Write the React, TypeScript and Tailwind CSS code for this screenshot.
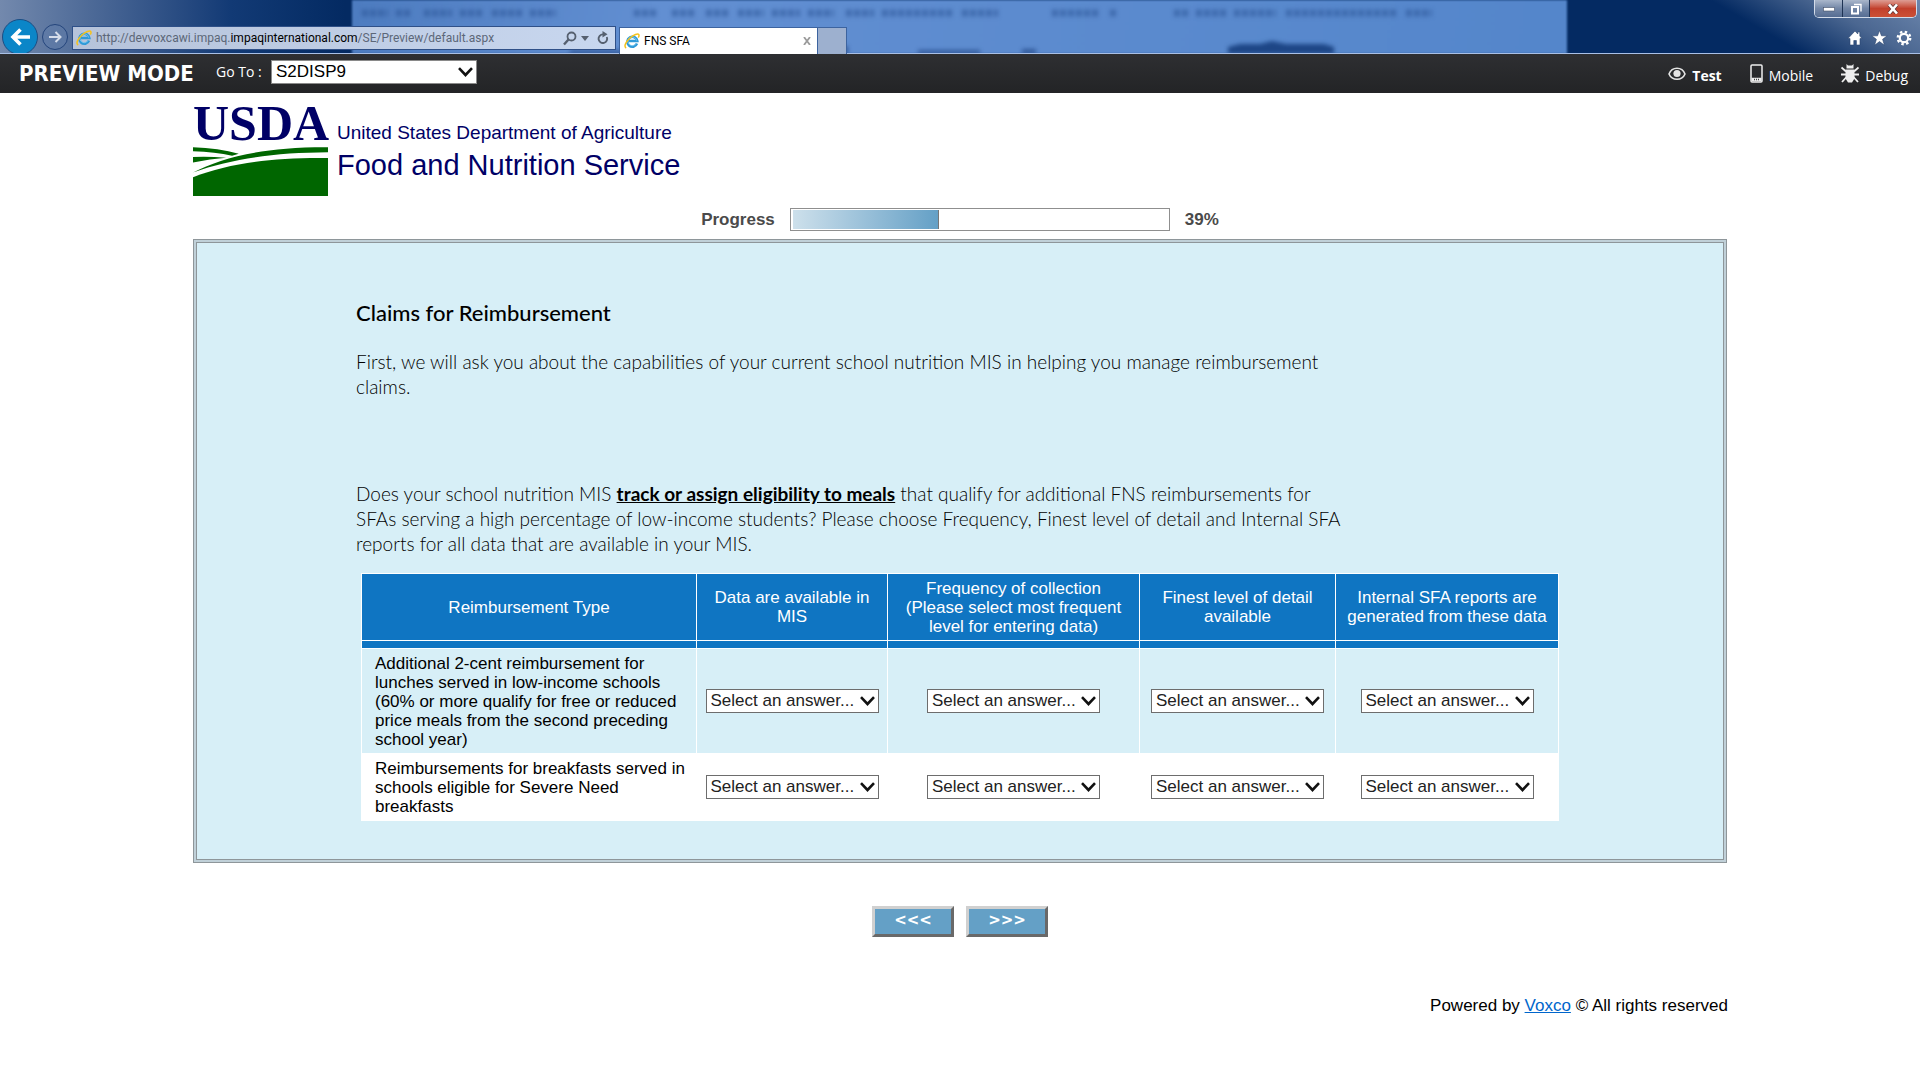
import { ReactNode } from "react";

const columns = [
    { title: "Data are available in MIS", width: "w-[191px]" },
    {
        title: "Frequency of collection (Please select most frequent level for entering data)",
        width: "w-[252px]",
    },
    { title: "Finest level of detail available", width: "w-[196px]" },
    {
        title: "Internal SFA reports are generated from these data",
        width: "w-[223px]",
    },
];

const rows = [
    {
        label: "Additional 2-cent reimbursement for lunches served in low-income schools (60% or more qualify for free or reduced price meals from the second preceding school year)",
        style: "h-[105px] bg-[#d7eff7]",
    },
    {
        label: "Reimbursements for breakfasts served in schools eligible for Severe Need breakfasts",
        style: "h-[67px] bg-white",
    },
];

// start x and length of the words on the window behind the glass
const ghostWords = [
    [362, 26], [396, 16], [424, 28], [460, 22], [492, 30], [530, 26],
    [634, 24], [672, 22], [706, 22], [738, 26], [772, 28], [808, 26],
    [846, 28], [882, 70], [962, 36], [1052, 48], [1110, 6],
    [1174, 14], [1196, 30], [1234, 42], [1286, 110], [1406, 26],
];

function IeLogo() {
    return (
        <svg className="size-4 shrink-0" viewBox="0 0 16 16" fill="none">
            <path
                d="M13 10.6A5 5 0 1 1 13.3 8H4.5"
                stroke="#2f9ad8"
                strokeWidth="2.6"
            />
            <path
                d="M12 10.6A4.4 4.4 0 1 1 12.6 7.6"
                stroke="#7fcdf3"
                strokeWidth=".8"
            />
            <path
                d="M2.2 15C-.6 13.6 2 8.6 6 5C9.800 1.600 14 .2 14.800 1.600C15.200 2.400 14.900 3.600 14.300 4.600"
                stroke="#f5c21b"
                strokeWidth="1.5"
            />
        </svg>
    );
}

function WindowChrome() {
    return (
        <header
            className="relative flex h-[54px] items-end overflow-hidden bg-[#042a62] font-['Roboto',sans-serif]"
        >
            <div className="absolute inset-0 bg-linear-to-r from-[#7389ad] via-[#123a75] via-12% to-[#042a62] to-18%" />
            <div className="absolute inset-y-0 right-0 w-64 bg-linear-[30deg] from-transparent from-40% via-[#4b6791] via-70% to-[#6c86ad]" />
            <div className="absolute inset-y-0 right-[353px] left-[352px] bg-linear-[100deg] from-[#4d7cc0] via-[#628fd2] via-25% to-[#5486cb] blur-[1px]" />
            <svg className="absolute inset-0 h-full w-full blur-[2px]">
                {ghostWords.map(([x, w]) => (
                    <line
                        key={x}
                        x1={x}
                        x2={x + w}
                        y1="13"
                        y2="13"
                        stroke="#2c5598"
                        strokeOpacity=".6"
                        strokeWidth="7"
                        strokeDasharray="6 2"
                    />
                ))}
                <path
                    d="M570 50h60v4h-60zM648 50h40v4h-40zM824 46h24v8h-24zM918 50h62v4h-62zM1022 49h14v5h-14z"
                    fill="#1f4585"
                    fillOpacity=".7"
                />
                <path d="M1228 54v-7l12-3h20l12-3 14 3h38l10 3v7z" fill="#1d4686" />
            </svg>
            <div className="absolute inset-x-0 bottom-0 h-px bg-[#a9c0e6]" />

            <nav className="relative flex h-[35px] items-start pl-0.5">
                <button aria-label="Back" className="h-[34px] w-[37px] overflow-hidden">
                    <svg width="37" height="37" viewBox="0 0 37 37">
                        <circle cx="18" cy="18" r="17.500" fill="#0b86c8" stroke="#1d4d83" />
                        <path
                            d="M28 18H11M18.500 10.500L11 18l7.500 7.500"
                            fill="none"
                            stroke="#fff"
                            strokeWidth="3.600"
                        />
                    </svg>
                </button>
                <button aria-label="Forward" className="ml-0.5 pt-1">
                    <svg width="28" height="28" viewBox="0 0 28 28">
                        <circle cx="14" cy="14" r="12.500" fill="#5f7ba8" fillOpacity=".6" stroke="#24457c" />
                        <path
                            d="M8 14h11M14.500 9l5 5-5 5"
                            fill="none"
                            stroke="#d4dcea"
                            strokeWidth="2"
                        />
                    </svg>
                </button>
            </nav>

            <div className="relative mb-1 ml-[3px] flex h-6 w-[544px] items-center gap-1 border border-[#2f5088] bg-linear-to-r from-[#b6c3da] to-[#c8d7ef] pr-1.5 pl-[3px]">
                <IeLogo />
                <span className="flex-1 whitespace-nowrap text-[12px] leading-4 text-[#5c6778]">
                    http://devvoxcawi.impaq.
                    <span className="text-black">impaqinternational.com</span>
                    /SE/Preview/default.aspx
                </span>
                <button aria-label="Search">
                    <svg width="14" height="15" viewBox="0 0 14 15" fill="none" stroke="#56606f">
                        <circle cx="8.500" cy="5.500" r="4" strokeWidth="1.800" />
                        <path d="M5.500 8.500L1 13.500" strokeWidth="2.400" />
                    </svg>
                </button>
                <button aria-label="Search options" className="mr-1">
                    <svg width="8" height="5" viewBox="0 0 8 5">
                        <path d="M0 0h8L4 5z" fill="#56606f" />
                    </svg>
                </button>
                <button aria-label="Refresh">
                    <svg width="12" height="14" viewBox="0 0 12 14" fill="none">
                        <path d="M9.800 6A4.300 4.300 0 1 1 6 3.400" stroke="#56606f" strokeWidth="1.900" />
                        <path d="M5.500 0v6.600L10.500 3.300z" fill="#56606f" />
                    </svg>
                </button>
            </div>

            <div className="relative ml-[3px] flex h-[27px] w-[199px] items-center gap-1 border-x border-t border-[#3c639f] bg-white pr-1.5 pl-1">
                <IeLogo />
                <span className="flex-1 text-[12px] leading-4 text-black">FNS SFA</span>
                <button aria-label="Close tab">
                    <svg width="8" height="8" viewBox="0 0 8 8">
                        <path d="M1 0l6 8M7 0L1 8" stroke="#9b9b9b" strokeWidth="1.800" />
                    </svg>
                </button>
            </div>
            <button
                aria-label="New tab"
                className="relative h-[27px] w-[29px] border-t border-r border-[#3c639f] bg-[#9db0cf]"
            />

            <div className="relative ml-auto flex h-full flex-col items-end pr-[3px]">
                <div className="flex h-[18px] overflow-hidden rounded-b-[5px] border border-t-0 border-[#d3dcea]">
                    <button
                        aria-label="Minimize"
                        className="flex w-7 items-center justify-center border-r border-[#1e3354] bg-linear-to-b from-[#aab7cb] via-[#7387a7] via-50% to-[#566d92]"
                    >
                        <svg width="12" height="6" viewBox="0 0 12 6">
                            <rect x=".5" y="1.500" width="11" height="3.500" fill="#fff" stroke="#44506a" strokeWidth=".6" />
                        </svg>
                    </button>
                    <button
                        aria-label="Restore"
                        className="flex w-[27px] items-center justify-center border-r border-[#1e3354] bg-linear-to-b from-[#aab7cb] via-[#7387a7] via-50% to-[#566d92]"
                    >
                        <svg width="12" height="12" viewBox="0 0 12 12" fill="none" stroke="#fff">
                            <path d="M4 1.500h7v7" strokeWidth="1.400" />
                            <rect x="2" y="4" width="6" height="6.500" strokeWidth="2" />
                        </svg>
                    </button>
                    <button
                        aria-label="Close"
                        className="flex w-[46px] items-center justify-center bg-linear-to-b from-[#dd9d94] via-[#c2402c] via-50% to-[#cc5036]"
                    >
                        <svg width="12" height="10" viewBox="0 0 12 10">
                            <path d="M2 .5l8 9M10 .5l-8 9" stroke="#5b3436" strokeWidth="4" />
                            <path d="M2 .5l8 9M10 .5l-8 9" stroke="#fff" strokeWidth="2.600" />
                        </svg>
                    </button>
                </div>
                <div className="mt-3 flex items-center gap-2 pr-[5px]">
                    <button aria-label="Home">
                        <svg width="16" height="16" viewBox="0 0 16 16">
                            <path
                                d="M8 1L1 8.500h2V15h3.800v-4.500h2.600V15H13V8.500h2L12.800 6V2h-2v2z"
                                fill="#fff"
                                stroke="#2a446f"
                                strokeWidth=".6"
                            />
                        </svg>
                    </button>
                    <button aria-label="Favorites">
                        <svg width="17" height="16" viewBox="0 0 17 16">
                            <path
                                d="M8.500 .5l2 5.300h5.700l-4.600 3.500 1.800 5.900-4.900-3.600-4.900 3.600 1.800-5.900L.8 5.800h5.700z"
                                fill="#fff"
                                stroke="#2a446f"
                                strokeWidth=".6"
                            />
                        </svg>
                    </button>
                    <button aria-label="Tools">
                        <svg width="16" height="16" viewBox="0 0 16 16" fill="none" stroke="#fff">
                            <circle cx="8" cy="8" r="4.200" strokeWidth="2.200" />
                            <circle cx="8" cy="8" r="6.200" strokeWidth="2.400" strokeDasharray="2.430 2.440" />
                        </svg>
                    </button>
                </div>
            </div>
        </header>
    );
}

function Chevron() {
    return (
        <svg
            className="pointer-events-none absolute top-1/2 right-1 h-[10px] w-[15px] -translate-y-1/2"
            viewBox="0 0 15 10"
        >
            <path d="M1 1.200L7.500 8L14 1.200" fill="none" stroke="#111" strokeWidth="2.600" />
        </svg>
    );
}

function ToolLink({ icon, children }: { icon: ReactNode; children: ReactNode }) {
    return (
        <a href="#" className="flex items-center gap-1.5">
            {icon}
            <span className="pt-1">{children}</span>
        </a>
    );
}

function PreviewBar() {
    return (
        <div className="flex h-[39px] items-center bg-linear-to-b from-[#2e2f32] to-[#232426] pr-3 pl-[19px] font-['Open_Sans',sans-serif] text-white">
            <strong className="w-[197px] font-['DejaVu_Sans_Condensed','DejaVu_Sans',sans-serif] text-[22px] leading-6 font-bold whitespace-nowrap">
                PREVIEW MODE
            </strong>
            <label htmlFor="goto" className="mb-1 w-[55px] text-[14px] leading-5 whitespace-nowrap">
                Go To :
            </label>
            <div className="relative mb-1">
                <select
                    id="goto"
                    className="block h-6 w-[206px] appearance-none border border-[#8a8a8a] bg-white pl-1 font-['Liberation_Sans',sans-serif] text-[17px] leading-5 text-black"
                >
                    <option>S2DISP9</option>
                </select>
                <Chevron />
            </div>
            <nav className="ml-auto flex gap-7 text-[14px] leading-5">
                <ToolLink
                    icon={
                        <svg width="18" height="14" viewBox="0 0 18 14" fill="none">
                            <path
                                d="M1 7C4-.6 14-.6 17 7C14 14 4 14 1 7z"
                                stroke="#e4e4e4"
                                strokeWidth="1.600"
                            />
                            <circle cx="9" cy="6.500" r="3.600" fill="#e4e4e4" />
                        </svg>
                    }
                >
                    <b>Test</b>
                </ToolLink>
                <ToolLink
                    icon={
                        <svg width="13" height="19" viewBox="0 0 13 19" fill="none">
                            <rect x="1" y="1" width="11" height="17" rx="1" stroke="#eee" strokeWidth="1.500" />
                            <path d="M1.500 15.500h10" stroke="#eee" strokeWidth="3.500" />
                            <path d="M4 15.500h1M6 15.500h1M8 15.500h1" stroke="#444" strokeWidth="1.500" />
                        </svg>
                    }
                >
                    Mobile
                </ToolLink>
                <ToolLink
                    icon={
                        <svg width="18" height="19" viewBox="0 0 18 19">
                            <path
                                d="M5.500 0l1.500 1.500h4L12.500 0v4.500h-7zM4.500 5.500h9v9L11 18.500H7L4.500 14.500z"
                                fill="#eee"
                            />
                            <path
                                d="M.5 3.500l4.500 4M17.500 3.500l-4.500 4M0 10.500h18M1 18l4.500-5M17 18l-4.500-5"
                                stroke="#eee"
                                strokeWidth="1.800"
                            />
                        </svg>
                    }
                >
                    Debug
                </ToolLink>
            </nav>
        </div>
    );
}

function AgencyLogo() {
    return (
        <div className="flex h-[104px] items-start gap-2 pt-1 pl-px font-['Liberation_Sans',sans-serif] text-[#000066]">
            <div className="w-[136px]">
                <div className="h-[50px] font-['Liberation_Serif',serif] text-[50px] leading-[52px] font-bold">
                    USDA
                </div>
                <svg className="h-[49px] w-[135px]" viewBox="43 174 404 146" preserveAspectRatio="none">
                    <g fill="#006600">
                        <path d="M43 175Q120 178 180 194L160 200Q110 189 43 187z" />
                        <path d="M43 204Q90 202 142 206Q95 210 43 220z" />
                        <path d="M43 250C130 206 250 174 447 175V190C290 191 160 208 43 250z" />
                        <path d="M43 264C150 222 280 205 447 207V320H43z" />
                    </g>
                </svg>
            </div>
            <div className="pt-6">
                <div className="text-[19px] leading-6">United States Department of Agriculture</div>
                <div className="text-[29px] leading-10">Food and Nutrition Service</div>
            </div>
        </div>
    );
}

function AnswerSelect({ label }: { label: string }) {
    return (
        <div className="relative inline-block align-middle">
            <select
                aria-label={label}
                className="block h-6 w-[173px] appearance-none border border-[#6d6d6d] bg-white pl-1 text-[17px] leading-5 text-[#222]"
            >
                <option>Select an answer...</option>
            </select>
            <Chevron />
        </div>
    );
}

export default function App() {
    const progress = 39;

    return (
        <div className="min-h-screen bg-white font-['Liberation_Sans',sans-serif] text-[17px] leading-[19px] text-black">
            <WindowChrome />
            <PreviewBar />

            <main className="mx-auto w-4/5">
                <AgencyLogo />

                <div className="mt-[11px] flex items-center justify-center gap-[15px] text-[17px] font-bold text-[#4a4a4a]">
                    <span>Progress</span>
                    <div className="h-[23px] w-[380px] border border-[#8f8f8f] bg-white px-0.5 py-px">
                        <div
                            className="h-full border-r border-[#777] bg-linear-to-r from-[#cde0eb] to-[#64a0c6]"
                            style={{ width: `${progress}%` }}
                        />
                    </div>
                    <span>{progress}%</span>
                </div>

                <section className="mx-px mt-2 border border-[#8e969a] bg-[#c0d0d8] p-0.5">
                    <div className="border border-[#8e969a] bg-[#d7eff7] px-[159px] pt-[57px] pb-[38px]">
                        <div className="max-w-[990px] font-['Lato',sans-serif] text-[19px] leading-[25px] font-light">
                            <h1 className="text-[22px] font-medium">Claims for Reimbursement</h1>
                            <p className="mt-6">
                                First, we will ask you about the capabilities of your current school nutrition MIS in
                                helping you manage reimbursement claims.
                            </p>
                            <p className="mt-[82px]">
                                Does your school nutrition MIS{" "}
                                <b className="font-bold underline">track or assign eligibility to meals</b> that
                                qualify for additional FNS reimbursements for SFAs serving a high percentage of
                                low-income students? Please choose Frequency, Finest level of detail and Internal SFA
                                reports for all data that are available in your MIS.
                            </p>
                        </div>

                        <table className="mt-[17px] ml-[5px] w-[1198px] table-fixed border-collapse border border-white">
                            <thead className="bg-[#0f75c2] text-white">
                                <tr className="h-[67px]">
                                    <th className="border border-white px-2 font-normal">Reimbursement Type</th>
                                    {columns.map((column) => (
                                        <th
                                            key={column.title}
                                            className={`border border-white px-2 font-normal ${column.width}`}
                                        >
                                            {column.title}
                                        </th>
                                    ))}
                                </tr>
                                <tr className="h-2" aria-hidden="true">
                                    <td className="border border-white p-0" />
                                    {columns.map((column) => (
                                        <td key={column.title} className="border border-white p-0" />
                                    ))}
                                </tr>
                            </thead>
                            <tbody>
                                {rows.map((row) => (
                                    <tr key={row.label} className={row.style}>
                                        <th
                                            scope="row"
                                            className="border border-white py-1 pr-1 pl-[13px] text-left font-normal"
                                        >
                                            {row.label}
                                        </th>
                                        {columns.map((column) => (
                                            <td key={column.title} className="border border-white p-0 text-center">
                                                <AnswerSelect label={column.title} />
                                            </td>
                                        ))}
                                    </tr>
                                ))}
                            </tbody>
                        </table>
                    </div>
                </section>

                <div className="mt-[43px] flex justify-center gap-3 font-['DejaVu_Sans',sans-serif] text-[15px] leading-5 font-bold text-white">
                    <button className="h-[31px] w-[82px] border-3 border-t-[#d0d0d0] border-r-[#696969] border-b-[#696969] border-l-[#d0d0d0] bg-[#64a0c6] pb-1">
                        {"<<<"}
                    </button>
                    <button className="h-[31px] w-[82px] border-3 border-t-[#d0d0d0] border-r-[#696969] border-b-[#696969] border-l-[#d0d0d0] bg-[#64a0c6] pb-1">
                        {">>>"}
                    </button>
                </div>

                <footer className="mt-[59px] text-right">
                    Powered by{" "}
                    <a href="#" className="text-[#0066cc] underline">
                        Voxco
                    </a>{" "}
                    © All rights reserved
                </footer>
            </main>
        </div>
    );
}
